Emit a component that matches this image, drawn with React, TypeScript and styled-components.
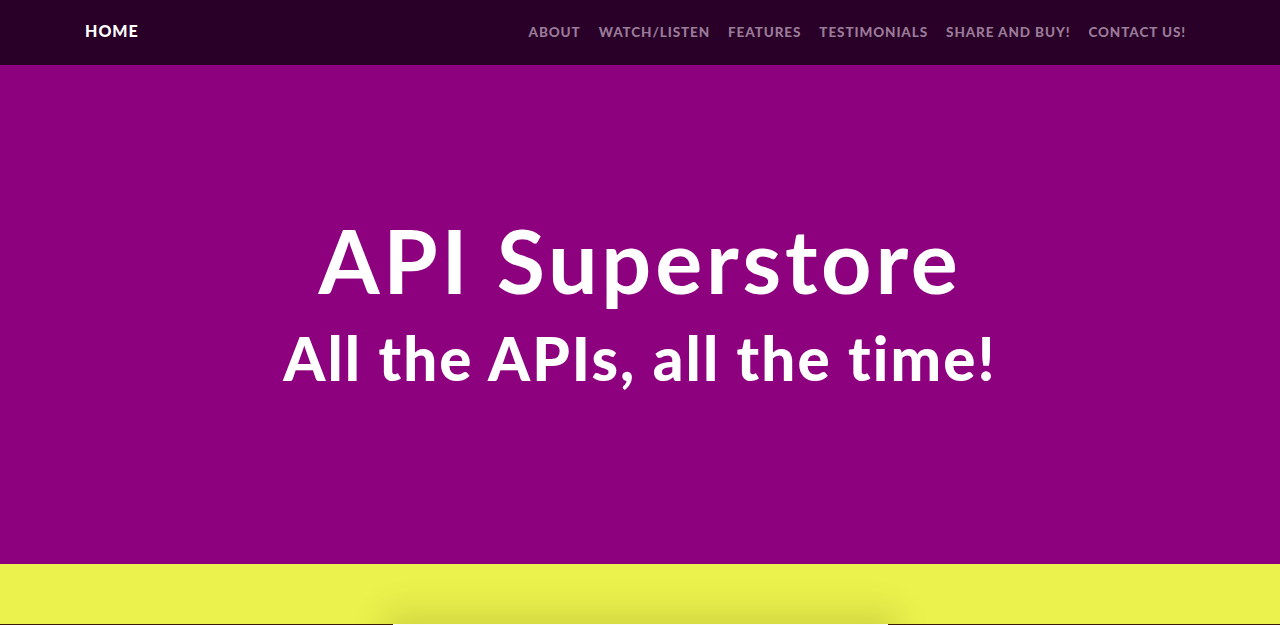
import styled, { createGlobalStyle } from "styled-components";

const links = ["About", "Watch/Listen", "Features", "Testimonials", "Share and Buy!", "Contact Us!"];

export default function App() {
  return (
    <>
      <GlobalStyle />
      <Nav>
        <HomeLink href='#'>Home</HomeLink>
        <NavList>
          {links.map((label) => (
            <NavItem key={label}>
              <NavLink href='#'>{label}</NavLink>
            </NavItem>
          ))}
        </NavList>
      </Nav>
      <Hero>
        <Title>API Superstore</Title>
        <Subtitle>All the APIs, all the time!</Subtitle>
      </Hero>
      <Band />
      <Media>
        <Card />
      </Media>
    </>
  );
}

const GlobalStyle = createGlobalStyle`
  body {
    margin: 0;
    font-family: Lato, "Open Sans", sans-serif;
    background: #fff;
  }
`;

const Nav = styled.nav`
  display: flex;
  align-items: center;
  justify-content: space-between;
  height: 65px;
  padding: 0 94px 5px 85px;
  box-sizing: border-box;
  background: #290028;
`;

const HomeLink = styled.a`
  font-size: 16px;
  font-weight: 900;
  letter-spacing: 1px;
  color: #fff;
  text-decoration: none;
  text-transform: uppercase;
`;

const NavList = styled.ul`
  display: flex;
  gap: 18px;
  margin: 0;
  padding: 0;
  list-style: none;
`;

const NavItem = styled.li``;

const NavLink = styled.a`
  font-size: 13.5px;
  font-weight: 900;
  letter-spacing: 0.9px;
  color: #9a7b98;
  text-decoration: none;
  text-transform: uppercase;
`;

const Hero = styled.header`
  display: flex;
  flex-direction: column;
  align-items: center;
  justify-content: center;
  height: 499px;
  padding-bottom: 26px;
  box-sizing: border-box;
  background: #8d007e;
  color: #fff;
  text-align: center;
`;

const Title = styled.h1`
  margin: 0;
  font-size: 88px;
  font-weight: 700;
  line-height: 1;
  letter-spacing: 3.8px;
`;

const Subtitle = styled.h2`
  margin: 24px 0 0;
  font-size: 60px;
  font-weight: 900;
  line-height: 1;
  letter-spacing: 2.1px;
`;

const Band = styled.section`
  height: 60px;
  background: #ebf24d;
`;

const Media = styled.section`
  display: flex;
  justify-content: center;
  height: 200px;
  background: #3a1a08;
`;

const Card = styled.div`
  position: relative;
  width: 495px;
  height: 180px;
  background: #fbfbfb;
  box-shadow: 0 -4px 30px 8px rgba(90, 90, 0, 0.18);
`;
